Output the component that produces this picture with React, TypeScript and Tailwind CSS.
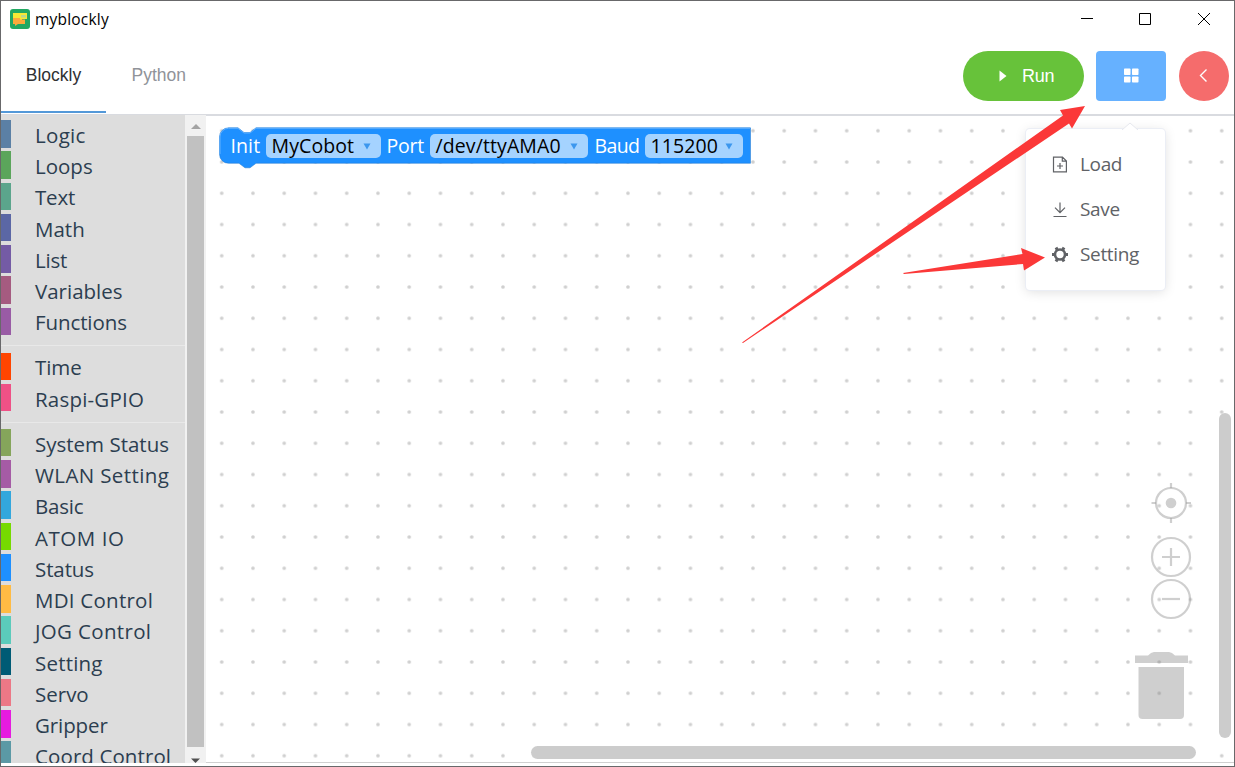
import React from "react";

const UI = "font-['Open_Sans','Noto_Sans',sans-serif]";

type Category = { name: string; color: string; tracking: string };

const groups: Category[][] = [
  [
    { name: "Logic", color: "bg-[#5b80a5]", tracking: "tracking-[0.3px]" },
    { name: "Loops", color: "bg-[#5ba55b]", tracking: "tracking-normal" },
    { name: "Text", color: "bg-[#5ba58c]", tracking: "tracking-[-0.2px]" },
    { name: "Math", color: "bg-[#5b67a5]", tracking: "tracking-normal" },
    { name: "List", color: "bg-[#745ba5]", tracking: "tracking-[-0.2px]" },
    { name: "Variables", color: "bg-[#a55b80]", tracking: "tracking-normal" },
    { name: "Functions", color: "bg-[#995ba5]", tracking: "tracking-[-0.1px]" },
  ],
  [
    { name: "Time", color: "bg-[#ff4500]", tracking: "tracking-[-0.1px]" },
    { name: "Raspi-GPIO", color: "bg-[#ef5186]", tracking: "tracking-[0.2px]" },
  ],
  [
    { name: "System Status", color: "bg-[#85a55b]", tracking: "tracking-normal" },
    { name: "WLAN Setting", color: "bg-[#a55ba5]", tracking: "tracking-[0.38px]" },
    { name: "Basic", color: "bg-[#33a7dd]", tracking: "tracking-[-0.2px]" },
    { name: "ATOM IO", color: "bg-[#76da00]", tracking: "tracking-[0.55px]" },
    { name: "Status", color: "bg-[#1e90ff]", tracking: "tracking-[-0.1px]" },
    { name: "MDI Control", color: "bg-[#ffbb44]", tracking: "tracking-[0.25px]" },
    { name: "JOG Control", color: "bg-[#5bcbbb]", tracking: "tracking-[0.33px]" },
    { name: "Setting", color: "bg-[#005b75]", tracking: "tracking-[0.2px]" },
    { name: "Servo", color: "bg-[#ec7886]", tracking: "tracking-normal" },
    { name: "Gripper", color: "bg-[#e61be0]", tracking: "tracking-[-0.1px]" },
    { name: "Coord Control", color: "bg-[#5b99a5]", tracking: "tracking-[0.1px]" },
  ],
];

function TitleBar() {
  return (
    <div className="flex h-[36px] shrink-0 items-center pl-[9px]">
      <svg width="20" height="20" viewBox="0 0 20 20">
        <rect width="20" height="20" rx="3" fill="#22a862" />
        <path d="M3 4H17V10H12V12H3Z" fill="#f6e935" />
        <path d="M11 6H16V8.5H11Z" fill="#b9d98c" />
        <path d="M3 9H10V10.5H15V15H8L5 17V15H3Z" fill="#fcaa3c" />
      </svg>
      <span className={`ml-[5px] pt-[2px] text-[15.5px] tracking-[0.2px] text-black ${UI}`}>myblockly</span>
      <svg className="mr-[22px] ml-auto" width="132" height="14" viewBox="0 0 132 14" fill="none" stroke="#000" strokeWidth="1">
        <path d="M1 6.5H13" />
        <path d="M59.5 1.5H70.5V12.5H59.5Z" />
        <path d="M118 1L130 13M130 1L118 13" />
      </svg>
    </div>
  );
}

function Header() {
  return (
    <div className="flex h-[79px] shrink-0 border-b-2 border-[#d9dbe0] font-['Liberation_Sans',sans-serif]">
      <div className="mb-px flex w-[105px] justify-center border-b-2 border-[#5398d8] pt-[26px] text-[17.5px] leading-[24px] text-[#303133]">
        Blockly
      </div>
      <div className="ml-[25.5px] pt-[26px] text-[17.5px] leading-[24px] text-[#909399]">Python</div>
      <div className="mr-[5px] ml-auto flex pt-[14px]">
        <div className="flex h-[50px] w-[121px] items-center rounded-full bg-[#67c23a] pl-[36px] text-[18px] tracking-[-0.3px] text-white">
          <svg width="8" height="12" viewBox="0 0 8 12">
            <path d="M0.5 0.5L7.5 6L0.5 11.5Z" fill="#fff" />
          </svg>
          <span className="ml-[15px]">Run</span>
        </div>
        <div className="ml-[12px] flex h-[50px] w-[70px] items-center justify-center rounded-[4px] bg-[#66b1ff]">
          <svg width="16" height="16" viewBox="0 0 16 16" fill="#fff">
            <rect x="1" y="0.5" width="6.5" height="6.5" rx="0.7" />
            <rect x="9" y="0.5" width="6.5" height="6.5" rx="0.7" />
            <rect x="1" y="8.5" width="6.5" height="6" rx="0.7" />
            <rect x="9" y="8.5" width="6.5" height="6" rx="0.7" />
          </svg>
        </div>
        <div className="ml-[13px] flex h-[50px] w-[50px] items-center justify-center rounded-full bg-[#f56c6c]">
          <svg width="10" height="14" viewBox="0 0 10 14" fill="none" stroke="#fff" strokeWidth="1.4">
            <path d="M7.5 0.500L1.500 6.500L7.500 12.500" />
          </svg>
        </div>
      </div>
    </div>
  );
}

function Toolbox() {
  return (
    <div className="flex h-[648px] w-[205px] shrink-0">
      <div className="w-[184px] overflow-hidden bg-[#dddddd] pt-[5px]">
        {groups.map((group, i) => (
          <div key={i} className={i ? "mt-[10.3px] border-t border-[#e8e8e8] pt-[6.3px]" : ""}>
            {group.map((c) => (
              <div key={c.name} className="mb-[3.75px] flex h-[27.5px] items-center">
                <div className={`h-full w-[10px] shrink-0 ${c.color}`} />
                <span className={`ml-[24px] pt-[3px] text-[20.5px] whitespace-nowrap text-[#2c3e50] ${UI} ${c.tracking}`}>{c.name}</span>
              </div>
            ))}
          </div>
        ))}
      </div>
      <div className="flex w-[21px] flex-col items-start bg-[#f1f1f1] pl-[2px]">
        <svg className="shrink-0" width="18" height="21" viewBox="0 0 18 21">
          <path d="M4 14H14L9 9Z" fill="#a3a3a3" />
        </svg>
        <div className="h-[611px] w-[17px] shrink-0 bg-[#c1c1c1]" />
        <svg className="shrink-0" width="18" height="16" viewBox="0 0 18 16">
          <path d="M4 11.500H13L8.500 16Z" fill="#505050" />
        </svg>
      </div>
    </div>
  );
}

function Field({ text, width }: { text: string; width: string }) {
  return (
    <div className={`flex h-[24px] items-center justify-between rounded-[5px] bg-[#a5d3ff] pr-[10px] pl-[6px] text-black ${width}`}>
      <span>{text}</span>
      <svg width="8" height="7" viewBox="0 0 8 7">
        <path d="M0.5 0.5H7.5L4 6.5Z" fill="#3c97ee" />
      </svg>
    </div>
  );
}

function InitBlock() {
  return (
    <div className="relative mt-[12px] ml-[12.5px] h-[42px] w-[533px]">
      <svg className="absolute inset-0" width="533" height="42" viewBox="0 0 533 42">
        <path
          d="M0.5 10A9 9 0 0 1 9.5 0.8H19L25 5.5H31L37 0.8H531.5V36.3H37L31 40.8H26L20 36.3H9.5A9 9 0 0 1 0.5 27.3Z"
          fill="#1e90ff"
          stroke="#1873cc"
          strokeWidth="0.5"
        />
        <path d="M1 27V10A8.5 8.5 0 0 1 9.5 1.3H19L25 6H31L37 1.3H531" fill="none" stroke="#62b1ff" strokeWidth="1" />
      </svg>
      <div
        className={`relative flex items-center pt-[7px] pl-[12px] text-[19.5px] leading-[24px] tracking-[0.1px] whitespace-nowrap text-white ${UI}`}
      >
        <span className="w-[35px]">Init</span>
        <Field text="MyCobot" width="w-[115px]" />
        <span className="ml-[6px] w-[43px] tracking-[-0.2px]">Port</span>
        <Field text="/dev/ttyAMA0" width="w-[158px]" />
        <span className="ml-[7px] w-[50px] tracking-[-0.6px]">Baud</span>
        <Field text="115200" width="w-[98px]" />
      </div>
    </div>
  );
}

function Workspace() {
  return (
    <div className="relative h-[648px] flex-1 border-b border-[#d0d0d0]">
      <svg className="absolute inset-0" width="100%" height="100%">
        <defs>
          <pattern id="grid" x="0.1" y="0.1" width="31.25" height="31.25" patternUnits="userSpaceOnUse">
            <circle cx="15.625" cy="15.625" r="1.8" fill="#cfcfcf" />
          </pattern>
        </defs>
        <rect width="100%" height="100%" fill="url(#grid)" />
      </svg>
      <InitBlock />
      <svg className="absolute right-[38px] bottom-[40px]" width="64" height="244" viewBox="1132 478 64 244">
        <g fill="none" stroke="#a0a0a0" strokeOpacity="0.5" strokeWidth="2.2">
          <circle cx="1171" cy="503" r="15" />
          <path d="M1171 483V488M1171 518V523M1151.5 503H1156M1186 503H1191" />
          <circle cx="1171" cy="557" r="19" />
          <path d="M1162 557H1180M1171 548V566" />
          <circle cx="1171" cy="599" r="19" />
          <path d="M1162 599H1180" />
        </g>
        <g fill="#808080" fillOpacity="0.38">
          <circle cx="1171" cy="503" r="5.3" />
          <path d="M1135 655.5H1148Q1151 652 1154 652H1169Q1172 652 1175 655.5H1188V663H1135Z" />
          <path d="M1138.500 667H1184V715Q1184 719 1180 719H1142.500Q1138.500 719 1138.500 715Z" />
        </g>
      </svg>
      <div className="absolute top-[298px] right-[3px] h-[325px] w-[12.5px] rounded-full bg-[#cccccc]" />
      <div className="absolute right-[38px] bottom-[3px] h-[13px] w-[665px] rounded-full bg-[#cccccc]" />
    </div>
  );
}

function SettingsMenu() {
  return (
    <div
      className={`absolute top-[129px] left-[1026px] flex h-[161px] w-[139px] flex-col rounded-[4px] bg-white pt-[13px] text-[19px] tracking-[-0.35px] text-[#606266] shadow-[0_2px_12px_rgba(0,0,0,0.13)] ring-1 ring-[#ebeef5] ${UI}`}
    >
      <svg className="absolute top-[-7px] left-[96px]" width="16" height="8" viewBox="0 0 16 8">
        <path d="M0 8L8 1L16 8" fill="#fff" stroke="#e6e8ee" strokeWidth="1" />
      </svg>
      <div className="flex h-[45px] items-center pl-[25px]">
        <svg width="18" height="18" viewBox="0 0 18 18" fill="none" stroke="#606266" strokeWidth="1.2">
          <path d="M2.500 1.100H11.500L15.400 5V15.900H2.500ZM11.300 1.100V5.200H15.400M6 10H12M9 7V13" />
        </svg>
        <span className="ml-[11px]">Load</span>
      </div>
      <div className="flex h-[45px] items-center pl-[25px]">
        <svg width="18" height="18" viewBox="0 0 18 18" fill="none" stroke="#606266" strokeWidth="1.2">
          <path d="M9 1.500V11.500M4 6.700L9 11.700L14 6.700M2.500 15.500H15.500" />
        </svg>
        <span className="ml-[11px]">Save</span>
      </div>
      <div className="flex h-[45px] items-center pl-[25px]">
        <svg width="18" height="18" viewBox="0 0 18 18" fill="none" stroke="#606266">
          <circle cx="9" cy="8.500" r="5" strokeWidth="2.600" />
          <path d="M5 1.600L6.800 4.700M13 1.600L11.200 4.700M1 8.500H4M14 8.500H17M5 15.400L6.800 12.300M13 15.400L11.200 12.300" strokeWidth="3" />
        </svg>
        <span className="ml-[11px]">Setting</span>
      </div>
    </div>
  );
}

export default function App() {
  return (
    <div className="relative flex h-[767px] w-[1235px] flex-col overflow-hidden border border-[#68686a] bg-white">
      <TitleBar />
      <Header />
      <div className="-mt-px flex flex-1 items-start">
        <Toolbox />
        <Workspace />
      </div>
      <div className="absolute -top-px -left-px h-[767px] w-[1235px]">
        <SettingsMenu />
        <svg className="absolute inset-0" width="1235" height="767" viewBox="0 0 1235 767" fill="#fb3838">
          <path d="M742 342.500L1063 115.500L1060 110L1085 106L1072 128.500L1069 123.500L743 343Z" />
          <path d="M903 273L1022.500 254L1021 248L1045 257.500L1024 270.500L1023 264L904 274Z" />
        </svg>
      </div>
    </div>
  );
}
